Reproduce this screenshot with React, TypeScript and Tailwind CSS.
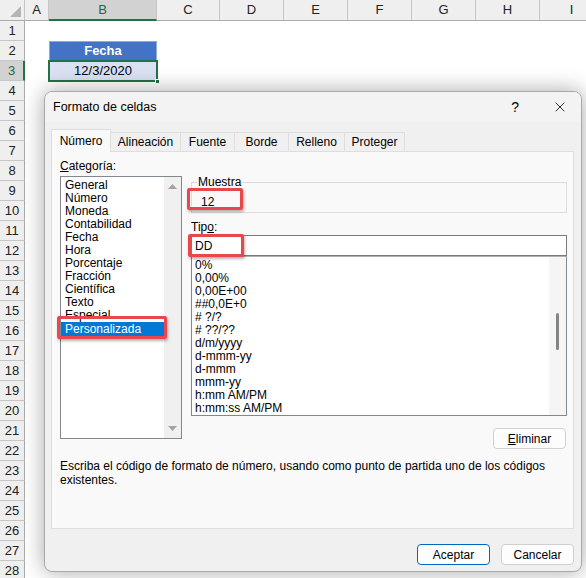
import { X } from 'lucide-react';

const columns = [
  { label: 'A', width: 24 },
  { label: 'B', width: 108 },
  { label: 'C', width: 63 },
  { label: 'D', width: 64 },
  { label: 'E', width: 64 },
  { label: 'F', width: 64 },
  { label: 'G', width: 64 },
  { label: 'H', width: 64 },
  { label: 'I', width: 64 },
];

const rows = Array.from({ length: 28 }, (_, i) => i + 1);

const categories = [
  'General',
  'Número',
  'Moneda',
  'Contabilidad',
  'Fecha',
  'Hora',
  'Porcentaje',
  'Fracción',
  'Científica',
  'Texto',
  'Especial',
  'Personalizada',
];

const formats = [
  '0%',
  '0,00%',
  '0,00E+00',
  '##0,0E+0',
  '# ?/?',
  '# ??/??',
  'd/m/yyyy',
  'd-mmm-yy',
  'd-mmm',
  'mmm-yy',
  'h:mm AM/PM',
  'h:mm:ss AM/PM',
];

const tabs = [
  { label: 'Número', width: 60 },
  { label: 'Alineación', width: 70 },
  { label: 'Fuente', width: 54 },
  { label: 'Borde', width: 54 },
  { label: 'Relleno', width: 56 },
  { label: 'Proteger', width: 60 },
];

function Sheet() {
  return (
    <div className="flex flex-col font-['Liberation_Sans',sans-serif] text-[13px] text-[#222]">
      {/* Column headers */}
      <div className="flex h-[21px] bg-[#efefef] border-b border-[#ababab]">
        <div className="w-[25px] shrink-0 border-r border-[#c6c6c6] relative">
          <svg width="25" height="21" className="absolute left-0 top-0">
            <polygon points="21,6 21,17 10,17" fill="#b4b4b4" />
          </svg>
        </div>
        {columns.map((c) => (
          <div
            key={c.label}
            style={{ width: c.width }}
            className={
              c.label === 'B'
                ? 'shrink-0 flex items-center justify-center bg-[#d2d2d2] border-r border-[#c6c6c6] border-b-2 border-b-[#217346] text-[#1e6b41] -mb-[1px]'
                : 'shrink-0 flex items-center justify-center border-r border-[#c6c6c6]'
            }
          >
            {c.label}
          </div>
        ))}
      </div>

      {/* Rows */}
      {rows.map((r) => (
        <div key={r} className="flex h-[20px]">
          <div
            className={
              r === 3
                ? 'w-[25px] shrink-0 flex items-center justify-center bg-[#d2d2d2] border-b border-[#c6c6c6] border-r-2 border-r-[#217346] text-[#1e6b41]'
                : 'w-[25px] shrink-0 flex items-center justify-center bg-[#efefef] border-b border-[#c6c6c6] border-r border-r-[#ababab]'
            }
          >
            {r}
          </div>
          <div className="w-[24px] shrink-0" />
          {r === 2 && (
            <div className="w-[108px] shrink-0 flex items-center justify-center bg-[#4472c4] border border-[#8ea9db] text-white font-bold">
              Fecha
            </div>
          )}
          {r === 3 && (
            <div className="w-[108px] shrink-0 relative flex items-center justify-center bg-[#d9e1f2] text-black">
              <div className="absolute -left-[1px] -top-[1px] -right-[1px] -bottom-[1px] border-2 border-[#217346]" />
              <div className="absolute -right-[3px] -bottom-[3px] w-[5px] h-[5px] bg-[#217346] border border-white" />
              <span className="relative">12/3/2020</span>
            </div>
          )}
        </div>
      ))}
    </div>
  );
}

function RedBox({ className }: { className: string }) {
  return (
    <div
      className={`absolute border-[3px] border-[#e8474c] rounded-[2px] shadow-[1px_2px_3px_rgba(0,0,0,0.3)] pointer-events-none ${className}`}
    />
  );
}

function FormatDialog() {
  return (
    <div className="absolute left-[44px] top-[91px] w-[538px] h-[481px] rounded-[8px] border border-[#a9a9a9] bg-[#f0f0f0] shadow-[0_0_22px_rgba(0,0,0,0.35)] overflow-hidden flex flex-col font-['Liberation_Sans',sans-serif] text-[12px] text-black">
      {/* Title bar */}
      <div className="h-[30px] shrink-0 bg-[#f3f3f3] flex items-center pl-[8px]">
        <span className="text-[12.5px]">Formato de celdas</span>
        <span className="ml-auto text-[14px] mr-[33px]">?</span>
        <X size={16} strokeWidth={1.2} className="mr-[13px]" />
      </div>

      <div className="flex-1 flex flex-col pl-[6px] pr-[7px] pt-[7px]">
        {/* Tabs */}
        <div className="flex items-end h-[22px] relative z-10">
          {tabs.map((t, i) =>
            i === 0 ? (
              <div
                key={t.label}
                style={{ width: t.width }}
                className="h-[23px] -mb-[1px] shrink-0 flex items-center justify-center bg-[#f9f9f9] border border-b-0 border-[#dedede]"
              >
                {t.label}
              </div>
            ) : (
              <div
                key={t.label}
                style={{ width: t.width }}
                className="h-[19px] shrink-0 flex items-center justify-center bg-[#f0f0f0] border border-l-0 border-b-0 border-[#dedede]"
              >
                {t.label}
              </div>
            ),
          )}
        </div>

        {/* Panel */}
        <div className="h-[378px] shrink-0 bg-[#f9f9f9] border border-[#dedede] pl-[8px] pt-[7px] flex flex-col">
          <div className="flex">
            {/* Category column */}
            <div className="w-[122px] shrink-0 flex flex-col">
              <div className="leading-[14px]">
                <span className="underline">C</span>ategoría:
              </div>
              <div className="mt-[3px] h-[263px] border border-[#828790] bg-white flex relative">
                <div className="flex-1 pl-[4px] pt-[2px] flex flex-col">
                  {categories.map((c) =>
                    c === 'Personalizada' ? (
                      <div
                        key={c}
                        className="h-[14px] leading-[14px] -ml-[4px] pl-[4px] bg-[#0078d7] text-white"
                      >
                        {c}
                      </div>
                    ) : (
                      <div key={c} className="h-[13px] leading-[13px]">
                        {c}
                      </div>
                    ),
                  )}
                </div>
                <div className="w-[17px] shrink-0 bg-[#f0f0f0] flex flex-col items-center justify-between py-[7px]">
                  <svg width="9" height="5">
                    <polygon points="0,5 9,5 4.5,0" fill="#a3a3a3" />
                  </svg>
                  <svg width="9" height="5">
                    <polygon points="0,0 9,0 4.5,5" fill="#a3a3a3" />
                  </svg>
                </div>
                <RedBox className="-left-[4px] top-[139px] w-[110px] h-[23px]" />
              </div>
            </div>

            {/* Type column */}
            <div className="ml-[9px] w-[376px] shrink-0 flex flex-col pt-[16px]">
              <fieldset className="relative border border-[#dcdcdc] h-[38px]">
                <legend className="ml-[5px] px-[1px] leading-[14px]">Muestra</legend>
                <div className="leading-[14px] mt-[6px] pl-[9px]">12</div>
                <RedBox className="-left-[5px] -top-[1px] w-[56px] h-[22px]" />
              </fieldset>
              <div className="mt-[7px] leading-[14px]">
                Tip<span className="underline">o</span>:
              </div>
              <div className="relative mt-[1px] h-[21px] border border-[#7a7a7a] bg-white pl-[3px] flex items-center">
                DD
                <RedBox className="-left-[4px] -top-[2px] w-[56px] h-[23px]" />
              </div>
              <div className="h-[160px] border border-[#828790] border-t-[#b0b0b0] bg-white flex">
                <div className="flex-1 pl-[3px] pt-[2px] flex flex-col">
                  {formats.map((f) => (
                    <div key={f} className="h-[13px] leading-[13px] whitespace-pre">
                      {f}
                    </div>
                  ))}
                </div>
                <div className="w-[17px] shrink-0 bg-[#f5f5f5] flex justify-center pt-[56px]">
                  <div className="w-[3px] h-[37px] rounded-full bg-[#858585]" />
                </div>
              </div>
              <div className="mt-[12px] flex justify-end pr-[1px]">
                <button className="w-[73px] h-[21px] rounded-[4px] border border-[#d0d0d0] bg-[#fdfdfd] text-[12px]">
                  <span className="underline">E</span>liminar
                </button>
              </div>
            </div>
          </div>

          <p className="mt-[10px] leading-[14px] pr-[20px]">
            Escriba el código de formato de número, usando como punto de partida uno de los códigos existentes.
          </p>
        </div>

        {/* Buttons */}
        <div className="mt-[15px] flex justify-end gap-[11px]">
          <button className="w-[73px] h-[21px] rounded-[4px] border border-[#0067c0] bg-[#fdfdfd] text-[12px]">
            Aceptar
          </button>
          <button className="w-[73px] h-[21px] rounded-[4px] border border-[#d0d0d0] bg-[#fdfdfd] text-[12px]">
            Cancelar
          </button>
        </div>
      </div>
    </div>
  );
}

export default function App() {
  return (
    <div className="w-[586px] h-[578px] relative overflow-hidden bg-white">
      <Sheet />
      <FormatDialog />
    </div>
  );
}
